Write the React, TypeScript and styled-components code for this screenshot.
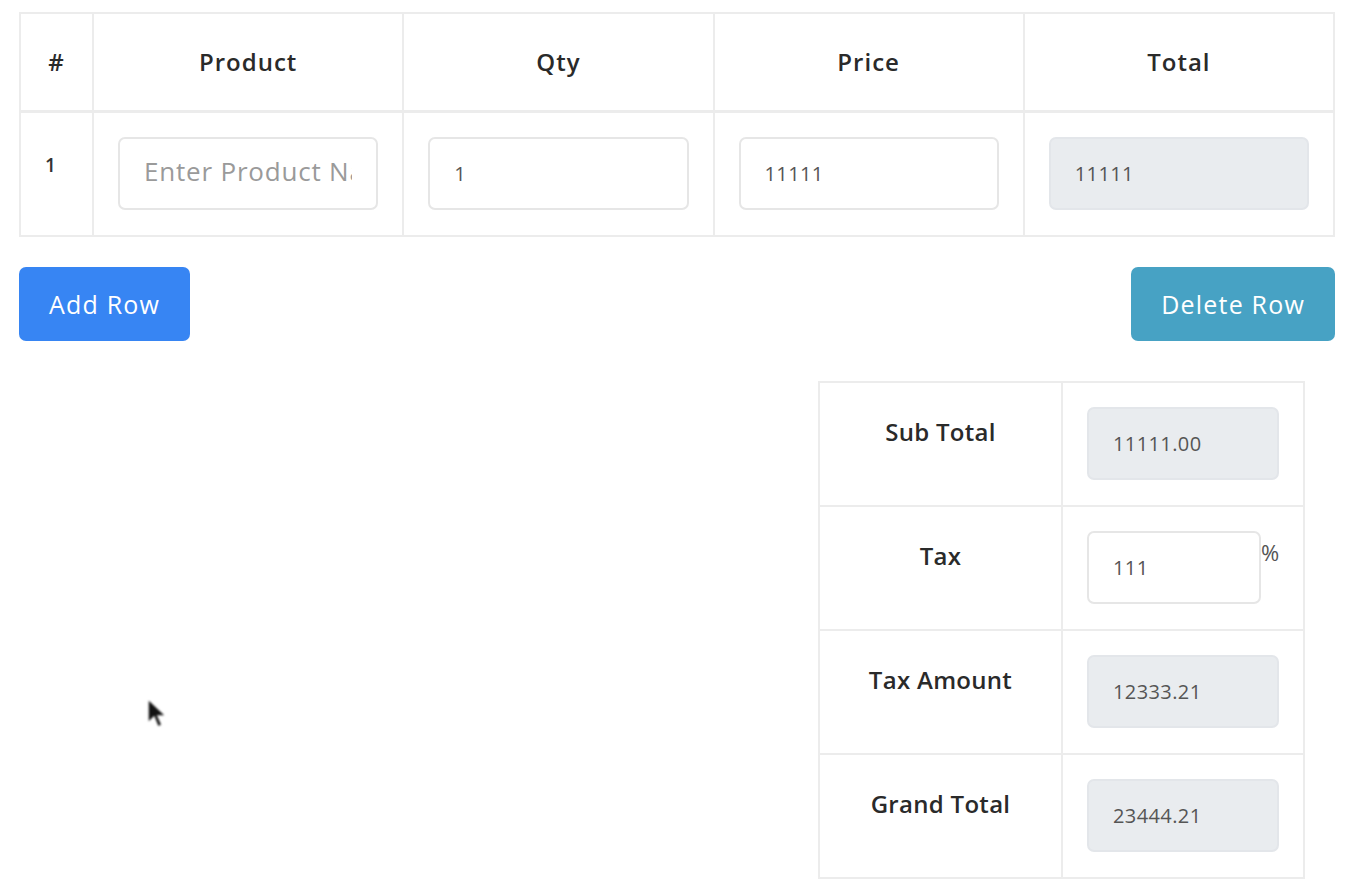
import React from "react";
import styled, { createGlobalStyle } from "styled-components";

const FONT = `"Open Sans", Lato, sans-serif`;

const Global = createGlobalStyle`
  html, body { margin: 0; padding: 0; background: #fff; }
  body { font-family: ${FONT}; color: #212529; }
  * { box-sizing: border-box; }
`;

const Page = styled.div`
  position: relative;
  width: 1352px;
  height: 888px;
  padding: 12px 17px 0 19px;
  overflow: hidden;
`;

const Table = styled.table`
  width: 1316px;
  border-collapse: collapse;
  table-layout: fixed;
  border: 2px solid #ececec;
`;

const Th = styled.th<{ $w?: number }>`
  ${(p) => (p.$w ? `width: ${p.$w}px;` : "")}
  height: 98px;
  border: 2px solid #ececec;
  border-bottom-width: 3px;
  font-size: 24px;
  font-weight: 600;
  letter-spacing: 1px;
  color: #2a2a2a;
  text-align: center;
  vertical-align: middle;
`;

const Td = styled.td`
  height: 125px;
  border: 2px solid #ececec;
  padding: 24px 24px 0 24px;
  vertical-align: top;
`;

const IndexCell = styled.td`
  height: 125px;
  border: 2px solid #ececec;
  padding: 37px 0 0 24px;
  vertical-align: top;
  font-size: 19px;
  font-weight: 600;
  line-height: 30px;
  color: #333;
`;

const Input = styled.input<{ $readonly?: boolean; $w?: number }>`
  display: block;
  width: ${(p) => (p.$w ? `${p.$w}px` : "100%")};
  height: 73px;
  padding: 0 24px;
  border: 2px solid ${(p) => (p.$readonly ? "#e3e6ea" : "#e6e6e6")};
  border-radius: 7px;
  background: ${(p) => (p.$readonly ? "#e9ecef" : "#fff")};
  font-family: ${FONT};
  font-size: 20px;
  letter-spacing: 0.4px;
  color: #555;
  outline: none;
  &::placeholder { color: #9a9a9a; font-size: 26px; letter-spacing: 0.8px; }
`;

const ButtonRow = styled.div`
  display: flex;
  justify-content: space-between;
  margin-top: 30px;
  width: 1316px;
`;

const Button = styled.button<{ $variant: "primary" | "info" }>`
  height: 74px;
  padding: 0 30px;
  border: none;
  border-radius: 7px;
  background: ${(p) => (p.$variant === "primary" ? "#3785f3" : "#47a2c4")};
  color: #fff;
  font-family: ${FONT};
  font-size: 25px;
  letter-spacing: 1.2px;
  cursor: pointer;
`;

const SummaryWrap = styled.div`
  display: flex;
  justify-content: flex-end;
  width: 1286px;
  margin-top: 40px;
`;

const SummaryTable = styled.table`
  width: 487px;
  border-collapse: collapse;
  table-layout: fixed;
  border: 2px solid #ececec;
`;

const Label = styled.th`
  width: 243px;
  height: 124px;
  border: 2px solid #ececec;
  padding: 31px 0 0 0;
  vertical-align: top;
  text-align: center;
  font-size: 24px;
  line-height: 36px;
  font-weight: 600;
  letter-spacing: 0.3px;
  color: #2a2a2a;
`;

const ValueCell = styled.td`
  height: 124px;
  border: 2px solid #ececec;
  padding: 24px 24px 0 24px;
  vertical-align: top;
`;

const Inline = styled.div`
  display: flex;
  align-items: flex-start;
`;

const Percent = styled.span`
  padding-top: 6px;
  font-size: 22px;
  color: #555;
`;

const Cursor = styled.svg`
  position: absolute;
  left: 146px;
  top: 697px;
  filter: blur(1px);
`;

export default function App() {
  return (
    <>
      <Global />
      <Page>
        <Table>
          <thead>
            <tr>
              <Th $w={73}>#</Th>
              <Th>Product</Th>
              <Th>Qty</Th>
              <Th>Price</Th>
              <Th>Total</Th>
            </tr>
          </thead>
          <tbody>
            <tr>
              <IndexCell>1</IndexCell>
              <Td>
                <Input placeholder="Enter Product Name" />
              </Td>
              <Td>
                <Input defaultValue="1" />
              </Td>
              <Td>
                <Input defaultValue="11111" />
              </Td>
              <Td>
                <Input $readonly readOnly defaultValue="11111" />
              </Td>
            </tr>
          </tbody>
        </Table>
        <ButtonRow>
          <Button $variant="primary">Add Row</Button>
          <Button $variant="info">Delete Row</Button>
        </ButtonRow>
        <SummaryWrap>
          <SummaryTable>
            <tbody>
              <tr>
                <Label>Sub Total</Label>
                <ValueCell>
                  <Input $readonly readOnly defaultValue="11111.00" />
                </ValueCell>
              </tr>
              <tr>
                <Label>Tax</Label>
                <ValueCell>
                  <Inline>
                    <Input $w={174} defaultValue="111" />
                    <Percent>%</Percent>
                  </Inline>
                </ValueCell>
              </tr>
              <tr>
                <Label>Tax Amount</Label>
                <ValueCell>
                  <Input $readonly readOnly defaultValue="12333.21" />
                </ValueCell>
              </tr>
              <tr>
                <Label>Grand Total</Label>
                <ValueCell>
                  <Input $readonly readOnly defaultValue="23444.21" />
                </ValueCell>
              </tr>
            </tbody>
          </SummaryTable>
        </SummaryWrap>
        <Cursor width="22" height="34" viewBox="0 0 22 34">
          <path d="M2 2 L2 26 L8 20 L12 30 L16 28 L12 19 L20 19 Z" fill="#111" stroke="#fff" strokeWidth="1.5" />
        </Cursor>
      </Page>
    </>
  );
}
